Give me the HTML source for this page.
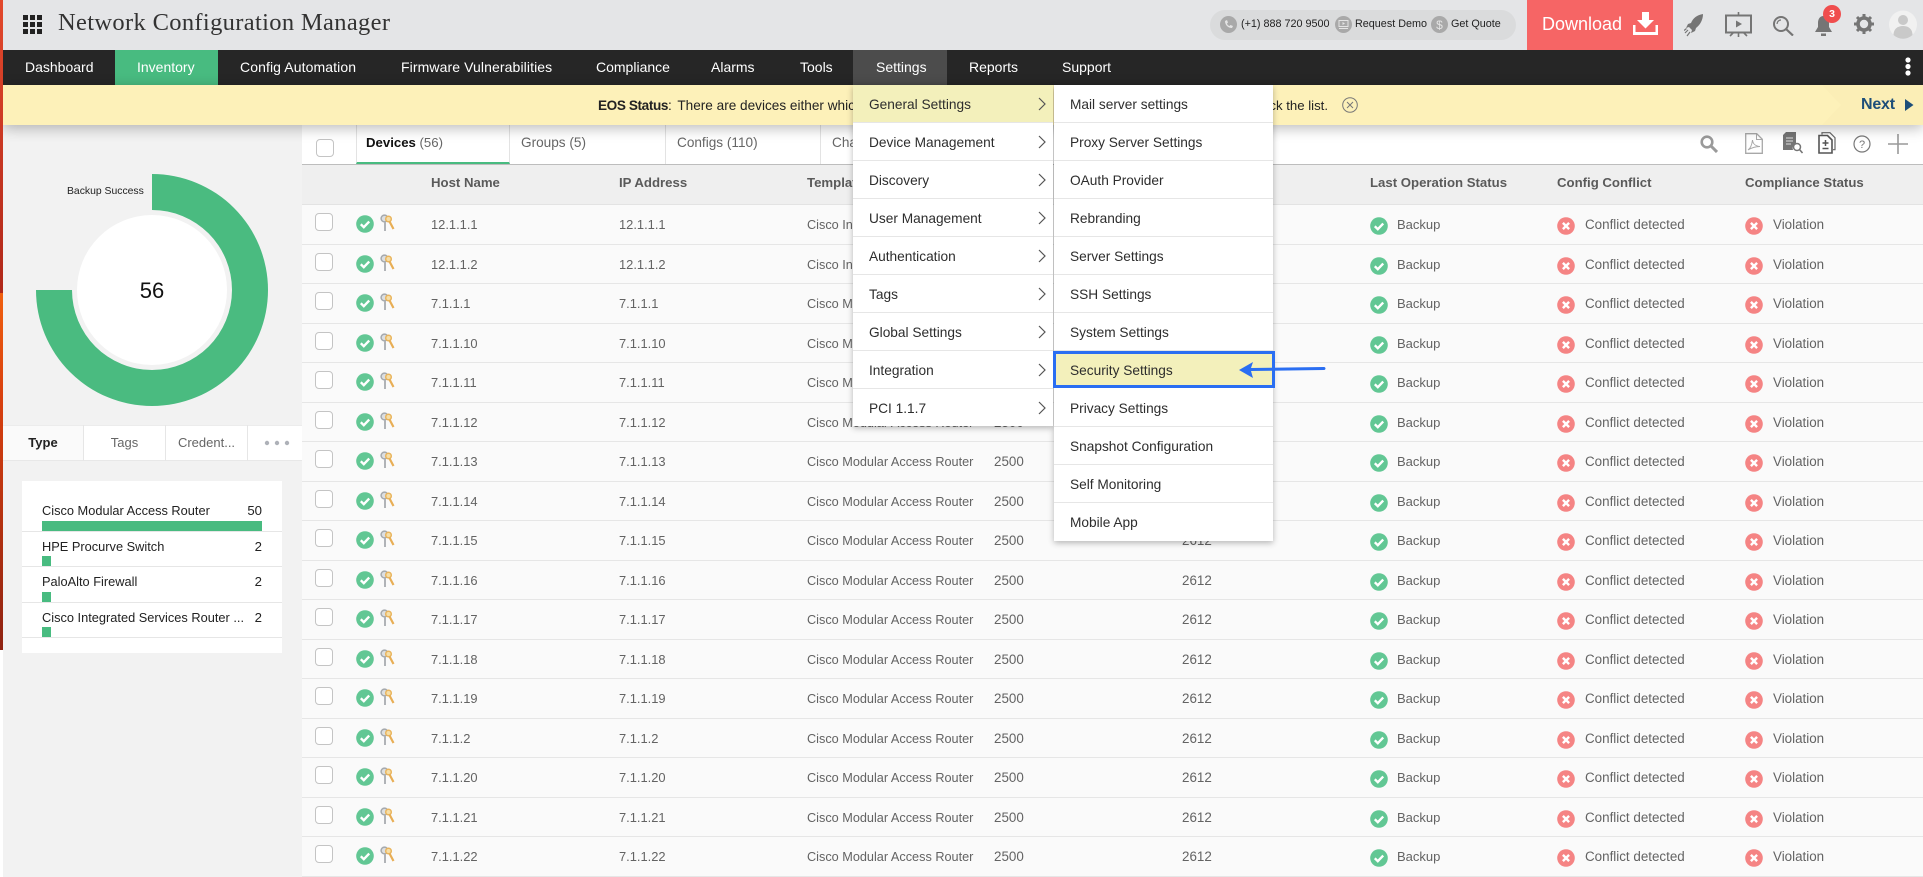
<!DOCTYPE html>
<html><head><meta charset="utf-8"><title>Network Configuration Manager</title>
<style>
*{box-sizing:border-box}
html,body{margin:0;padding:0;width:1923px;height:877px;overflow:hidden;background:#fff;font-family:"Liberation Sans",sans-serif;color:#222}
.a{position:absolute;white-space:nowrap}
#hdr{position:absolute;left:0;top:0;width:1923px;height:50px;background:#e4e5e7}
#strip{position:absolute;left:0;top:0;width:3px;height:650px;background:linear-gradient(180deg,#e2482c 0,#b0281a 293px,#f0600f 293px,#d8400f 400px,#8f2312 650px);z-index:9}
.nav{top:50px;height:35px;line-height:34px;font-size:14px;color:#fff}
.cb{position:absolute;width:18px;height:18px;border:1px solid #c4c4c4;border-radius:4px;background:#fff}
#rows{position:absolute;left:302px;top:205px;width:1621px}
.r{position:relative;height:39.5px;background:#fafafa;border-bottom:1px solid #e6e6e6;font-size:13.4px;color:#636363}
.r span{position:absolute;top:10px;line-height:20px;white-space:nowrap}
.r svg{position:absolute}
.r .cb{left:13px;top:8px}
.r .s{left:54px;top:10px;width:18px;height:18px}
.r .k{left:78px;top:9px;width:15px;height:18px}
.r .o1{left:1068px;top:12px;width:18px;height:18px}
.r .o2{left:1255px;top:12px;width:18px;height:18px}
.r .o3{left:1443px;top:12px;width:18px;height:18px}
.h{left:129px;font-size:12.9px}.i{left:317px;font-size:12.9px}.t{left:505px;font-size:12.7px}.v{left:692px}.w{left:880px}.b{left:1095px;font-size:13px}.c{left:1283px}.l{left:1471px}
.th{position:absolute;top:173px;font-size:13.2px;font-weight:bold;color:#5a5a5a;line-height:20px;white-space:nowrap}
.tab{position:absolute;top:125px;height:39px;line-height:36px;font-size:13.6px;color:#666;border-right:1px solid #e3e3e3;background:#fff;padding-left:11px}
.m{position:absolute;height:38px;border-bottom:1px solid #e6e6e6;background:#fff;font-size:13.7px;color:#2d2d2d;line-height:39px;white-space:nowrap}
.m1{left:853px;width:200px;padding-left:16px}
.m2{left:1054px;width:219px;padding-left:16px}
.m svg{position:absolute;left:185px;top:12px;width:8px;height:14px}
.li{position:absolute;left:42px;width:220px;font-size:12.8px;color:#222;line-height:18px;white-space:nowrap}
.li b{position:absolute;right:0;top:0;font-weight:normal;font-size:13.2px}
.bar{position:absolute;left:42px;height:10px;background:#48bb80}
.dv{position:absolute;left:22px;width:260px;height:1px;background:#e6e6e6}
</style></head>
<body>
<svg width="0" height="0" style="position:absolute">
<symbol id="ok" viewBox="0 0 18 18"><circle cx="9" cy="9" r="8.8" fill="#62c794"/><path d="M4.8 9.3l3 2.9 5.4-5.6" fill="none" stroke="#fff" stroke-width="2.4"/></symbol>
<symbol id="no" viewBox="0 0 18 18"><circle cx="9" cy="9" r="8.8" fill="#f58484"/><path d="M5.9 5.9l6.2 6.2M12.1 5.9l-6.2 6.2" fill="none" stroke="#fff" stroke-width="2.4"/></symbol>
<symbol id="key" viewBox="0 0 15 18"><circle cx="4.5" cy="4.500" r="3.400" fill="#dcdfe2" stroke="#a5a9ad" stroke-width="1.500"/><path d="M5 8v9" stroke="#b0b3b7" stroke-width="2"/><circle cx="8.500" cy="5" r="2.800" fill="#f6dfa8" stroke="#e9b45c" stroke-width="1.500"/><path d="M9.500 7.500l4 7.500" stroke="#e8ae55" stroke-width="2.200"/></symbol>
<symbol id="chev" viewBox="0 0 8 14"><path d="M1 1l6 6-6 6" fill="none" stroke="#555" stroke-width="1.2"/></symbol>
</svg>

<div id="hdr"></div><div id="strip"></div>
<svg class="a" style="left:23px;top:15px" width="19" height="19" viewBox="0 0 19 19"><path fill="#222" d="M0 0h5v5H0zM7 0h5v5H7zM14 0h5v5h-5zM0 7h5v5H0zM7 7h5v5H7zM14 7h5v5h-5zM0 14h5v5H0zM7 14h5v5H7zM14 14h5v5h-5z"/></svg>
<div class="a" style="left:58px;top:8px;font:24.5px/30px 'Liberation Serif',serif;letter-spacing:.34px;color:#333">Network Configuration Manager</div>

<div class="a" style="left:1210px;top:10px;width:306px;height:30px;border-radius:15px;background:#dadbdc"></div>
<svg class="a" style="left:1220px;top:16px" width="17" height="17" viewBox="0 0 17 17"><circle cx="8.5" cy="8.5" r="8.5" fill="#a9a9a9"/><path d="M5 5c0 4 3 7 7 7l1-2-2.500-1-1 1C8 9.500 7.500 9 7 7.500l1-1L7 4z" fill="#e4e4e4"/></svg>
<div class="a" style="left:1241px;top:15px;font-size:10.8px;line-height:18px;color:#222">(+1) 888 720 9500</div>
<svg class="a" style="left:1335px;top:16px" width="17" height="17" viewBox="0 0 17 17"><circle cx="8.500" cy="8.500" r="8.500" fill="#a9a9a9"/><path d="M4 4.500h9v6H4zM4 12.500h9" fill="none" stroke="#e4e4e4"/><path d="M7.500 6l2.500 1.500L7.500 9z" fill="#e4e4e4"/></svg>
<div class="a" style="left:1355px;top:15px;font-size:10.8px;line-height:18px;color:#222">Request Demo</div>
<svg class="a" style="left:1431px;top:16px" width="17" height="17" viewBox="0 0 17 17"><circle cx="8.500" cy="8.500" r="8.500" fill="#a9a9a9"/><text x="8.500" y="13" text-anchor="middle" font-size="12" fill="#e4e4e4" font-family="Liberation Sans">$</text></svg>
<div class="a" style="left:1451px;top:15px;font-size:10.8px;line-height:18px;color:#222">Get Quote</div>

<div class="a" style="left:1527px;top:0;width:146px;height:50px;background:#f66565"></div>
<div class="a" style="left:1542px;top:11px;font-size:18px;line-height:26px;color:#fff">Download</div>
<svg class="a" style="left:1633px;top:12px" width="25" height="23" viewBox="0 0 25 23"><path d="M9 0h7v8h5l-8.500 8.500L4 8h5z" fill="#fff"/><path d="M1 13v8.500h23V13" fill="none" stroke="#fff" stroke-width="3"/></svg>

<svg class="a" style="left:1684px;top:14px" width="20" height="23" viewBox="0 0 20 23"><path d="M19 0C13 1 9 4 7 9l-3 1-2 4 3-1 3 3-1 3 4-2 1-3c4-3 7-8 7-14z" fill="#757575"/><path d="M4 16l-3 3M6 18l-3 4M2.500 14.500L0 16.500" stroke="#757575" stroke-width="1.200"/></svg>
<svg class="a" style="left:1725px;top:12px" width="27" height="25" viewBox="0 0 27 25"><path d="M1 3.500h25v17H1z" fill="none" stroke="#757575" stroke-width="2"/><path d="M13.500 0v3M13.500 21v4M8 21l-3 3M19 21l3 3" stroke="#757575" stroke-width="1.600"/><path d="M11 8.500l6 3.500-6 3.500z" fill="#757575"/></svg>
<svg class="a" style="left:1773px;top:16px" width="21" height="20" viewBox="0 0 21 20"><circle cx="8" cy="8" r="7" fill="none" stroke="#757575" stroke-width="2"/><path d="M13 13l7 6.500" stroke="#757575" stroke-width="2.200"/><path d="M4 8a4 4 0 0 1 4-4" fill="none" stroke="#757575" stroke-width="1.200"/></svg>
<svg class="a" style="left:1815px;top:16px" width="17" height="20" viewBox="0 0 17 20"><path d="M8.500 0C5 0 3 3 3 7v4l-3 5h17l-3-5V7c0-4-2-7-5.500-7z" fill="#757575"/><path d="M6 17.500h5v2.500H6z" fill="#757575"/></svg>
<div class="a" style="left:1823px;top:5px;width:18px;height:18px;border-radius:50%;background:#f04e4e;color:#fff;font:bold 10.500px/18px 'Liberation Sans',sans-serif;text-align:center">3</div>
<svg class="a" style="left:1854px;top:14px" width="20" height="20" viewBox="0 0 20 20"><circle cx="10" cy="10" r="6" fill="none" stroke="#757575" stroke-width="3.600"/><path d="M10 0v4M10 16v4M0 10h4M16 10h4M3 3l2.800 2.800M14.200 14.200L17 17M17 3l-2.800 2.800M5.800 14.200L3 17" stroke="#757575" stroke-width="3"/></svg>
<svg class="a" style="left:1889px;top:10px" width="28" height="29" viewBox="0 0 28 29"><circle cx="14" cy="14.500" r="14" fill="#f1f1f1"/><circle cx="14" cy="10" r="5" fill="#c9c9c9"/><path d="M4.500 25c0-6 4-9 9.500-9s9.500 3 9.500 9a14 14 0 0 1-19 0z" fill="#c9c9c9"/></svg>

<div class="a" style="left:3px;top:50px;width:1920px;height:35px;background:#262626"></div>
<div class="a" style="left:115px;top:50px;width:103px;height:35px;background:#48bb80"></div>
<div class="a" style="left:853px;top:50px;width:94px;height:35px;background:#4c4c4c"></div>
<div class="a nav" style="left:25px">Dashboard</div>
<div class="a nav" style="left:137px">Inventory</div>
<div class="a nav" style="left:240px;letter-spacing:.1px">Config Automation</div>
<div class="a nav" style="left:401px;letter-spacing:.1px">Firmware Vulnerabilities</div>
<div class="a nav" style="left:596px">Compliance</div>
<div class="a nav" style="left:711px">Alarms</div>
<div class="a nav" style="left:800px">Tools</div>
<div class="a nav" style="left:876px">Settings</div>
<div class="a nav" style="left:969px">Reports</div>
<div class="a nav" style="left:1062px">Support</div>
<svg class="a" style="left:1905px;top:57px" width="6" height="19" viewBox="0 0 6 19"><circle cx="3" cy="3" r="2.600" fill="#fff"/><circle cx="3" cy="9.500" r="2.600" fill="#fff"/><circle cx="3" cy="16" r="2.600" fill="#fff"/></svg>

<!-- sidebar -->
<div class="a" style="left:3px;top:125px;width:299px;height:752px;background:#f2f2f2"></div>
<svg class="a" style="left:36px;top:174px" width="232" height="232" viewBox="0 0 232 232"><path d="M116 0A116 116 0 1 1 0 116H36A80 80 0 1 0 116 36z" fill="#4abb80"/><circle cx="116" cy="116" r="75" fill="#fff"/></svg>
<div class="a" style="left:67px;top:184px;font-size:10.400px;line-height:16px;color:#222">Backup Success</div>
<div class="a" style="left:122px;top:276px;width:60px;text-align:center;font-size:22px;line-height:30px;color:#111">56</div>
<div class="a" style="left:3px;top:425px;width:299px;height:36px;background:#fff;border-top:1px solid #ececec;border-bottom:1px solid #e8e8e8"></div>
<div class="a" style="left:3px;top:426px;width:80px;height:34px;background:#fafafa"></div>
<div class="a" style="left:83px;top:425px;width:1px;height:36px;background:#e6e6e6"></div>
<div class="a" style="left:165px;top:425px;width:1px;height:36px;background:#e6e6e6"></div>
<div class="a" style="left:247px;top:425px;width:1px;height:36px;background:#e6e6e6"></div>
<div class="a" style="left:3px;top:434px;width:80px;text-align:center;font-size:13px;font-weight:bold;line-height:18px;color:#222">Type</div>
<div class="a" style="left:84px;top:434px;width:81px;text-align:center;font-size:13px;line-height:18px;color:#666">Tags</div>
<div class="a" style="left:166px;top:434px;width:81px;text-align:center;font-size:13px;line-height:18px;color:#666">Credent...</div>
<svg class="a" style="left:264px;top:440px" width="26" height="6" viewBox="0 0 26 6"><circle cx="3" cy="3" r="2.200" fill="#aeb1b8"/><circle cx="13" cy="3" r="2.200" fill="#aeb1b8"/><circle cx="23" cy="3" r="2.200" fill="#aeb1b8"/></svg>

<div class="a" style="left:22px;top:481px;width:260px;height:172px;background:#fff"></div>
<div class="li" style="top:502px">Cisco Modular Access Router<b>50</b></div>
<div class="bar" style="top:521px;width:220px"></div><div class="dv" style="top:531px"></div>
<div class="li" style="top:538px">HPE Procurve Switch<b>2</b></div>
<div class="bar" style="top:556px;width:9px"></div><div class="dv" style="top:566px"></div>
<div class="li" style="top:573px">PaloAlto Firewall<b>2</b></div>
<div class="bar" style="top:592px;width:9px"></div><div class="dv" style="top:602px"></div>
<div class="li" style="top:609px">Cisco Integrated Services Router ...<b>2</b></div>
<div class="bar" style="top:627px;width:9px"></div><div class="dv" style="top:637px"></div>

<!-- toolbar -->
<div class="a" style="left:302px;top:125px;width:1621px;height:40px;background:#fff;border-bottom:1px solid #bdbdbd"></div>
<div class="cb" style="left:316px;top:139px"></div>
<div class="tab" style="left:356px;width:154px;border-left:1px solid #e3e3e3;border-bottom:2px solid #48bb80;color:#666;padding-left:9px;font-size:13.2px"><b style="color:#111">Devices</b> (56)</div>
<div class="tab" style="left:510px;width:156px">Groups (5)</div>
<div class="tab" style="left:666px;width:155px">Configs (110)</div>
<div class="tab" style="left:821px;width:140px">Changes</div>
<svg class="a" style="left:1700px;top:135px" width="18" height="18" viewBox="0 0 18 18"><circle cx="7" cy="7" r="5.300" fill="none" stroke="#9a9a9a" stroke-width="2.600"/><path d="M11 11l6 6" stroke="#9a9a9a" stroke-width="3"/></svg>
<svg class="a" style="left:1745px;top:133px" width="18" height="21" viewBox="0 0 18 21"><path d="M.7.700h11l5.600 5.600v14H.7z" fill="none" stroke="#a8a8a8" stroke-width="1.300"/><path d="M11.500 1v5.500h5.500M3 17c3-2 4-6 4.500-10 .5 4 2.500 6 7.500 6.500-4 0-8 1-12 3.500z" fill="none" stroke="#a8a8a8"/></svg>
<svg class="a" style="left:1783px;top:132px" width="20" height="22" viewBox="0 0 20 22"><path d="M0 3l3-3h10v11a5.500 5.500 0 0 0-3 7H0z" fill="#757575"/><path d="M3 6h7M3 9h7M3 12h5" stroke="#e0e0e0"/><circle cx="14" cy="15" r="3.500" fill="none" stroke="#757575" stroke-width="1.500"/><path d="M16.500 17.500l3 3.500" stroke="#757575" stroke-width="1.600"/></svg>
<svg class="a" style="left:1818px;top:132px" width="18" height="22" viewBox="0 0 18 22"><path d="M4 2.500V.7h8l5 5v12h-2" fill="none" stroke="#666" stroke-width="1.200"/><path d="M1 3.500h8.500l4.500 4.500v13H1z" fill="none" stroke="#555" stroke-width="1.600"/><path d="M7.500 8v6M4.500 11h6M4.500 16.500h6" stroke="#555" stroke-width="1.500"/></svg>
<svg class="a" style="left:1853px;top:135px" width="18" height="18" viewBox="0 0 18 18"><circle cx="9" cy="9" r="8" fill="none" stroke="#777" stroke-width="1.200"/><text x="9" y="13" text-anchor="middle" font-size="11" fill="#777" font-family="Liberation Sans">?</text></svg>
<svg class="a" style="left:1888px;top:134px" width="20" height="20" viewBox="0 0 20 20"><path d="M10 0v20M0 10h20" stroke="#999" stroke-width="1.600"/></svg>

<!-- table head -->
<div class="a" style="left:302px;top:165px;width:1621px;height:40px;background:#efefef;border-bottom:1px solid #e3e3e3"></div>
<div class="th" style="left:431px">Host Name</div>
<div class="th" style="left:619px">IP Address</div>
<div class="th" style="left:807px">Template</div>
<div class="th" style="left:1370px">Last Operation Status</div>
<div class="th" style="left:1557px">Config Conflict</div>
<div class="th" style="left:1745px">Compliance Status</div>

<div id="rows">
<div class="r"><div class="cb"></div><svg class="s"><use href="#ok"/></svg><svg class="k"><use href="#key"/></svg><span class="h">12.1.1.1</span><span class="i">12.1.1.1</span><span class="t">Cisco Integrated Services Router</span><svg class="o1"><use href="#ok"/></svg><span class="b">Backup</span><svg class="o2"><use href="#no"/></svg><span class="c">Conflict detected</span><svg class="o3"><use href="#no"/></svg><span class="l">Violation</span></div>
<div class="r"><div class="cb"></div><svg class="s"><use href="#ok"/></svg><svg class="k"><use href="#key"/></svg><span class="h">12.1.1.2</span><span class="i">12.1.1.2</span><span class="t">Cisco Integrated Services Router</span><svg class="o1"><use href="#ok"/></svg><span class="b">Backup</span><svg class="o2"><use href="#no"/></svg><span class="c">Conflict detected</span><svg class="o3"><use href="#no"/></svg><span class="l">Violation</span></div>
<div class="r"><div class="cb"></div><svg class="s"><use href="#ok"/></svg><svg class="k"><use href="#key"/></svg><span class="h">7.1.1.1</span><span class="i">7.1.1.1</span><span class="t">Cisco Modular Access Router</span><svg class="o1"><use href="#ok"/></svg><span class="b">Backup</span><svg class="o2"><use href="#no"/></svg><span class="c">Conflict detected</span><svg class="o3"><use href="#no"/></svg><span class="l">Violation</span></div>
<div class="r"><div class="cb"></div><svg class="s"><use href="#ok"/></svg><svg class="k"><use href="#key"/></svg><span class="h">7.1.1.10</span><span class="i">7.1.1.10</span><span class="t">Cisco Modular Access Router</span><svg class="o1"><use href="#ok"/></svg><span class="b">Backup</span><svg class="o2"><use href="#no"/></svg><span class="c">Conflict detected</span><svg class="o3"><use href="#no"/></svg><span class="l">Violation</span></div>
<div class="r"><div class="cb"></div><svg class="s"><use href="#ok"/></svg><svg class="k"><use href="#key"/></svg><span class="h">7.1.1.11</span><span class="i">7.1.1.11</span><span class="t">Cisco Modular Access Router</span><svg class="o1"><use href="#ok"/></svg><span class="b">Backup</span><svg class="o2"><use href="#no"/></svg><span class="c">Conflict detected</span><svg class="o3"><use href="#no"/></svg><span class="l">Violation</span></div>
<div class="r"><div class="cb"></div><svg class="s"><use href="#ok"/></svg><svg class="k"><use href="#key"/></svg><span class="h">7.1.1.12</span><span class="i">7.1.1.12</span><span class="t">Cisco Modular Access Router</span><span class="v">2500</span><svg class="o1"><use href="#ok"/></svg><span class="b">Backup</span><svg class="o2"><use href="#no"/></svg><span class="c">Conflict detected</span><svg class="o3"><use href="#no"/></svg><span class="l">Violation</span></div>
<div class="r"><div class="cb"></div><svg class="s"><use href="#ok"/></svg><svg class="k"><use href="#key"/></svg><span class="h">7.1.1.13</span><span class="i">7.1.1.13</span><span class="t">Cisco Modular Access Router</span><span class="v">2500</span><svg class="o1"><use href="#ok"/></svg><span class="b">Backup</span><svg class="o2"><use href="#no"/></svg><span class="c">Conflict detected</span><svg class="o3"><use href="#no"/></svg><span class="l">Violation</span></div>
<div class="r"><div class="cb"></div><svg class="s"><use href="#ok"/></svg><svg class="k"><use href="#key"/></svg><span class="h">7.1.1.14</span><span class="i">7.1.1.14</span><span class="t">Cisco Modular Access Router</span><span class="v">2500</span><svg class="o1"><use href="#ok"/></svg><span class="b">Backup</span><svg class="o2"><use href="#no"/></svg><span class="c">Conflict detected</span><svg class="o3"><use href="#no"/></svg><span class="l">Violation</span></div>
<div class="r"><div class="cb"></div><svg class="s"><use href="#ok"/></svg><svg class="k"><use href="#key"/></svg><span class="h">7.1.1.15</span><span class="i">7.1.1.15</span><span class="t">Cisco Modular Access Router</span><span class="v">2500</span><span class="w">2612</span><svg class="o1"><use href="#ok"/></svg><span class="b">Backup</span><svg class="o2"><use href="#no"/></svg><span class="c">Conflict detected</span><svg class="o3"><use href="#no"/></svg><span class="l">Violation</span></div>
<div class="r"><div class="cb"></div><svg class="s"><use href="#ok"/></svg><svg class="k"><use href="#key"/></svg><span class="h">7.1.1.16</span><span class="i">7.1.1.16</span><span class="t">Cisco Modular Access Router</span><span class="v">2500</span><span class="w">2612</span><svg class="o1"><use href="#ok"/></svg><span class="b">Backup</span><svg class="o2"><use href="#no"/></svg><span class="c">Conflict detected</span><svg class="o3"><use href="#no"/></svg><span class="l">Violation</span></div>
<div class="r"><div class="cb"></div><svg class="s"><use href="#ok"/></svg><svg class="k"><use href="#key"/></svg><span class="h">7.1.1.17</span><span class="i">7.1.1.17</span><span class="t">Cisco Modular Access Router</span><span class="v">2500</span><span class="w">2612</span><svg class="o1"><use href="#ok"/></svg><span class="b">Backup</span><svg class="o2"><use href="#no"/></svg><span class="c">Conflict detected</span><svg class="o3"><use href="#no"/></svg><span class="l">Violation</span></div>
<div class="r"><div class="cb"></div><svg class="s"><use href="#ok"/></svg><svg class="k"><use href="#key"/></svg><span class="h">7.1.1.18</span><span class="i">7.1.1.18</span><span class="t">Cisco Modular Access Router</span><span class="v">2500</span><span class="w">2612</span><svg class="o1"><use href="#ok"/></svg><span class="b">Backup</span><svg class="o2"><use href="#no"/></svg><span class="c">Conflict detected</span><svg class="o3"><use href="#no"/></svg><span class="l">Violation</span></div>
<div class="r"><div class="cb"></div><svg class="s"><use href="#ok"/></svg><svg class="k"><use href="#key"/></svg><span class="h">7.1.1.19</span><span class="i">7.1.1.19</span><span class="t">Cisco Modular Access Router</span><span class="v">2500</span><span class="w">2612</span><svg class="o1"><use href="#ok"/></svg><span class="b">Backup</span><svg class="o2"><use href="#no"/></svg><span class="c">Conflict detected</span><svg class="o3"><use href="#no"/></svg><span class="l">Violation</span></div>
<div class="r"><div class="cb"></div><svg class="s"><use href="#ok"/></svg><svg class="k"><use href="#key"/></svg><span class="h">7.1.1.2</span><span class="i">7.1.1.2</span><span class="t">Cisco Modular Access Router</span><span class="v">2500</span><span class="w">2612</span><svg class="o1"><use href="#ok"/></svg><span class="b">Backup</span><svg class="o2"><use href="#no"/></svg><span class="c">Conflict detected</span><svg class="o3"><use href="#no"/></svg><span class="l">Violation</span></div>
<div class="r"><div class="cb"></div><svg class="s"><use href="#ok"/></svg><svg class="k"><use href="#key"/></svg><span class="h">7.1.1.20</span><span class="i">7.1.1.20</span><span class="t">Cisco Modular Access Router</span><span class="v">2500</span><span class="w">2612</span><svg class="o1"><use href="#ok"/></svg><span class="b">Backup</span><svg class="o2"><use href="#no"/></svg><span class="c">Conflict detected</span><svg class="o3"><use href="#no"/></svg><span class="l">Violation</span></div>
<div class="r"><div class="cb"></div><svg class="s"><use href="#ok"/></svg><svg class="k"><use href="#key"/></svg><span class="h">7.1.1.21</span><span class="i">7.1.1.21</span><span class="t">Cisco Modular Access Router</span><span class="v">2500</span><span class="w">2612</span><svg class="o1"><use href="#ok"/></svg><span class="b">Backup</span><svg class="o2"><use href="#no"/></svg><span class="c">Conflict detected</span><svg class="o3"><use href="#no"/></svg><span class="l">Violation</span></div>
<div class="r"><div class="cb"></div><svg class="s"><use href="#ok"/></svg><svg class="k"><use href="#key"/></svg><span class="h">7.1.1.22</span><span class="i">7.1.1.22</span><span class="t">Cisco Modular Access Router</span><span class="v">2500</span><span class="w">2612</span><svg class="o1"><use href="#ok"/></svg><span class="b">Backup</span><svg class="o2"><use href="#no"/></svg><span class="c">Conflict detected</span><svg class="o3"><use href="#no"/></svg><span class="l">Violation</span></div>
</div>

<!-- yellow band -->
<div class="a" style="left:3px;top:85px;width:1920px;height:40px;background:#fdf1b9;box-shadow:0 3px 14px rgba(0,0,0,.28)"></div>
<svg class="a" style="left:1822px;top:85px" width="101" height="40" viewBox="0 0 101 40"><path d="M0 0h101v40H0l19-20z" fill="#fbeeb6"/></svg>
<div class="a" style="left:598px;top:96px;font-size:13.600px;line-height:20px;color:#222"><b style="letter-spacing:-.4px">EOS Status</b>:<span style="margin-left:2px"> There are devices either which are nearing end of life</span></div>
<div class="a" style="left:1199px;top:96px;width:129px;text-align:right;font-size:13.200px;line-height:20px;color:#222">Click to check the list.</div>
<svg class="a" style="left:1342px;top:97px" width="16" height="16" viewBox="0 0 16 16"><circle cx="8" cy="8" r="7.300" fill="none" stroke="#777" stroke-width="1"/><path d="M5 5l6 6M11 5l-6 6" stroke="#777" stroke-width="1"/></svg>
<div class="a" style="left:1861px;top:94px;font-size:16px;font-weight:bold;line-height:22px;color:#1d4e79;letter-spacing:-.2px">Next</div>
<svg class="a" style="left:1905px;top:99px" width="9" height="12" viewBox="0 0 9 12"><path d="M0 0l8.500 6L0 12z" fill="#1d4e79"/></svg>

<!-- menus -->
<div class="a" style="left:853px;top:85px;width:200px;height:341px;background:#fff;box-shadow:0 2px 6px rgba(0,0,0,.28)"></div>
<div class="a" style="left:1054px;top:85px;width:219px;height:456px;background:#fff;box-shadow:0 2px 6px rgba(0,0,0,.28)"></div>
<div class="m m1" style="top:85px;background:#f3f0bb">General Settings<svg><use href="#chev"/></svg></div>
<div class="m m1" style="top:123px">Device Management<svg><use href="#chev"/></svg></div>
<div class="m m1" style="top:161px">Discovery<svg><use href="#chev"/></svg></div>
<div class="m m1" style="top:199px">User Management<svg><use href="#chev"/></svg></div>
<div class="m m1" style="top:237px">Authentication<svg><use href="#chev"/></svg></div>
<div class="m m1" style="top:275px">Tags<svg><use href="#chev"/></svg></div>
<div class="m m1" style="top:313px">Global Settings<svg><use href="#chev"/></svg></div>
<div class="m m1" style="top:351px">Integration<svg><use href="#chev"/></svg></div>
<div class="m m1" style="top:389px;height:37px;border-bottom:0">PCI 1.1.7<svg><use href="#chev"/></svg></div>
<div class="m m2" style="top:85px">Mail server settings</div>
<div class="m m2" style="top:123px">Proxy Server Settings</div>
<div class="m m2" style="top:161px">OAuth Provider</div>
<div class="m m2" style="top:199px">Rebranding</div>
<div class="m m2" style="top:237px">Server Settings</div>
<div class="m m2" style="top:275px">SSH Settings</div>
<div class="m m2" style="top:313px">System Settings</div>
<div class="m m2" style="top:389px">Privacy Settings</div>
<div class="m m2" style="top:427px">Snapshot Configuration</div>
<div class="m m2" style="top:465px">Self Monitoring</div>
<div class="m m2" style="top:503px;border-bottom:0">Mobile App</div>
<div class="a" style="left:1053px;top:351px;width:222px;height:37px;background:#f3f0bb;border:3px solid #2a6ef2;font-size:13.700px;line-height:33px;color:#2d2d2d;padding-left:14px">Security Settings</div>
<svg class="a" style="left:1238px;top:360px" width="90" height="20" viewBox="0 0 90 20"><path d="M1 10L15 2l-2 6 73-1c2 0 2 3 0 3l-73 1 2 7z" fill="#2a6ef2"/></svg>
</body></html>
